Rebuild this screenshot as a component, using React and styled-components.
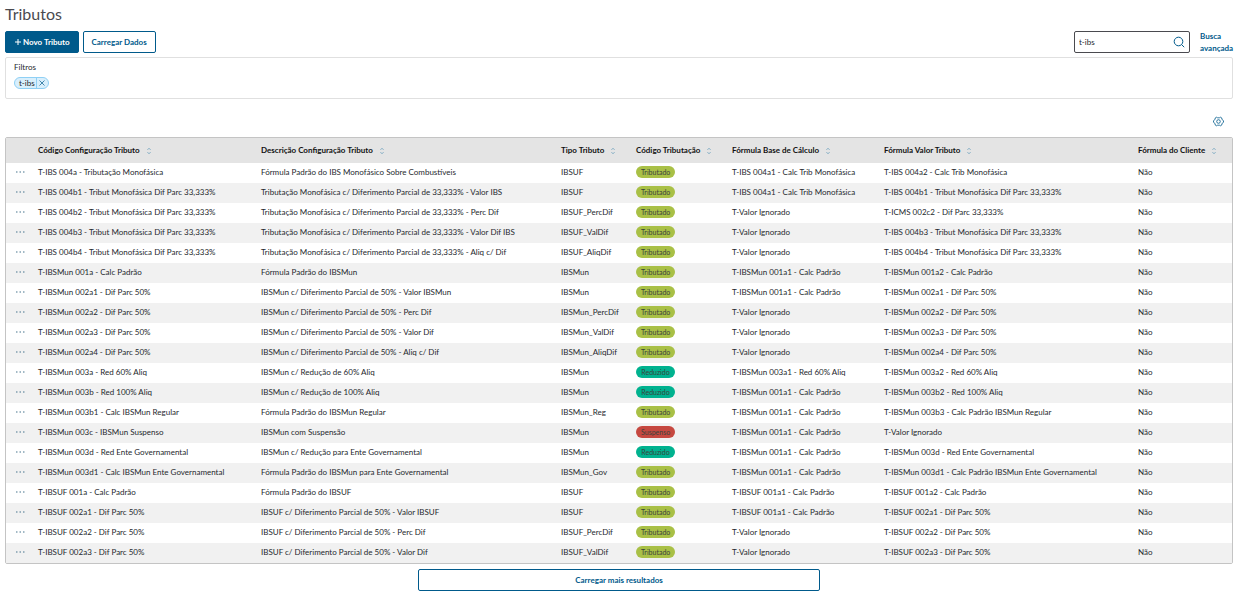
import React, { useState } from "react"
import styled, { createGlobalStyle } from "styled-components"

const colors = {
  primary: "#005a8b",
  text: "#25282d",
  muted: "#4a4a4f",
  line: "#e0e0e0",
  tableLine: "#c4c4c4",
  header: "#e4e4e4",
  stripe: "#f1f1f1",
}

const GlobalStyle = createGlobalStyle`
  * {
    box-sizing: border-box;
  }

  body {
    margin: 0;
    background: #fff;
    color: ${colors.text};
    font: 8px/12px Lato, "Open Sans", sans-serif;
  }

  button,
  input {
    font: inherit;
  }
`

const Page = styled.main`
  padding: 4px 6px 4px 5px;
`

const Title = styled.h1`
  margin: 0 0 6px;
  color: ${colors.muted};
  font-size: 16px;
  font-weight: 400;
  line-height: 20px;
`

const Toolbar = styled.div`
  display: flex;
  align-items: center;
  gap: 4px;
  margin-bottom: 3px;
`

const Button = styled.button`
  display: inline-flex;
  align-items: center;
  justify-content: center;
  gap: 1px;
  height: 22px;
  padding: 0 8px 1px;
  border: 1px solid ${colors.primary};
  border-radius: 2px;
  background: ${props => (props.$primary ? colors.primary : "#fff")};
  color: ${props => (props.$primary ? "#fff" : colors.primary)};
  font-weight: 700;
  white-space: nowrap;
  cursor: pointer;
`

const SearchArea = styled.div`
  display: flex;
  align-items: center;
  gap: 10px;
  margin-left: auto;
`

const SearchBox = styled.div`
  display: flex;
  align-items: center;
  width: 116px;
  height: 22px;
  padding: 0 4px;
  border: 1px solid ${colors.muted};
  border-radius: 2px;

  input {
    flex: 1;
    min-width: 0;
    padding: 0;
    border: 0;
    outline: 0;
    background: none;
    color: ${colors.text};
  }
`

const IconButton = styled.button`
  display: inline-flex;
  align-items: center;
  justify-content: center;
  padding: 0;
  border: 0;
  background: none;
  color: ${colors.primary};
  cursor: pointer;
`

const AdvancedLink = styled.a`
  width: 33px;
  color: ${colors.primary};
  font-weight: 700;
  text-decoration: none;
`

const FilterPanel = styled.section`
  height: 42px;
  padding: 3px 8px;
  border: 1px solid ${colors.line};
  border-radius: 2px;
`

const FilterTitle = styled.div`
  margin-bottom: 4px;
`

const Chip = styled.span`
  display: flex;
  align-items: center;
  width: fit-content;
  height: 12px;
  border: 1px solid #8fd0f5;
  border-radius: 6px;
  background: #d9effc;
  line-height: 10px;
  overflow: hidden;

  span {
    padding: 0 1px 0 4px;
  }

  button {
    width: 12px;
    height: 10px;
    border-left: 1px solid #8fd0f5;
  }
`

const TableTools = styled.div`
  display: flex;
  justify-content: flex-end;
  padding: 17px 9px 10px;
`

const TableFrame = styled.div`
  border: 1px solid ${colors.tableLine};
  border-radius: 2px;
  overflow: hidden;
`

const Table = styled.table`
  width: 100%;
  table-layout: fixed;
  border-collapse: collapse;

  th,
  td {
    padding: 0 0 2px;
    text-align: left;
    white-space: nowrap;
  }

  th {
    height: 25px;
    background: ${colors.header};
    color: #111;
    font-weight: 700;
  }

  td {
    height: 20px;
  }

  tbody tr:nth-child(even) {
    background: ${colors.stripe};
  }
`

const SortButton = styled(IconButton)`
  gap: 6px;
  color: inherit;
  font-weight: 700;

  svg {
    margin-top: 2px;
  }
`

const RowMenu = styled(IconButton)`
  display: flex;
  width: 28px;
  height: 12px;
`

const badgeColors = {
  Tributado: "#a9c046",
  Reduzido: "#00b28f",
  Suspenso: "#c64840",
}

const Badge = styled.span`
  display: block;
  width: fit-content;
  min-width: 39px;
  padding: 0 5px;
  border-radius: 6px;
  background: ${props => badgeColors[props.$kind]};
  color: #39423b;
  font-size: 7px;
  text-align: center;
`

const Footer = styled.div`
  display: flex;
  justify-content: center;
  padding-top: 5px;

  button {
    width: 402px;
  }
`

const PlusIcon = () => (
  <svg width="8" height="8" viewBox="0 0 8 8" stroke="currentColor" fill="none">
    <path d="M4 1v6M1 4h6" />
  </svg>
)

const SearchIcon = () => (
  <svg width="12" height="12" viewBox="0 0 12 12" stroke="currentColor" fill="none">
    <circle cx="5.5" cy="5.5" r="4.3" />
    <path d="M8.6 8.6l2.6 2.6" />
  </svg>
)

const CloseIcon = () => (
  <svg width="6" height="6" viewBox="0 0 6 6" stroke="currentColor" strokeWidth="0.7">
    <path d="M.5.5l5 5M5.5.5l-5 5" />
  </svg>
)

const GearIcon = () => (
  <svg width="11" height="11" viewBox="0 0 11 11" stroke="currentColor" fill="none" strokeWidth="0.8">
    <path d="M3.3 1.2L4.6 1.8H6.4L7.7 1.2 8.8 2 8.9 3.400 10.500 4.700V6.300L8.900 7.600 8.800 9 7.700 9.800 6.400 9.200H4.600L3.300 9.800 2.200 9 2.100 7.600.5 6.300V4.700L2.100 3.400 2.200 2z" />
    <circle cx="5.500" cy="5.500" r="1.800" />
  </svg>
)

const SortIcon = () => (
  <svg width="6" height="8" viewBox="0 0 6 8" stroke="#4d8fb3" fill="none" strokeWidth="0.7">
    <path d="M1.500 2.800L3 1.300 4.500 2.800M1.500 5.200L3 6.700 4.500 5.200" />
  </svg>
)

const DotsIcon = () => (
  <svg width="9" height="2" viewBox="0 0 9 2" fill="#47748d">
    <path d="M0 .5h1.500v1H0zM3.500.5H5v1H3.500zM7 .5h1.500v1H7z" />
  </svg>
)

const columns = [
  { title: "Código Configuração Tributo", width: 223 },
  { title: "Descrição Configuração Tributo", width: 300 },
  { title: "Tipo Tributo", width: 75 },
  { title: "Código Tributação", width: 96 },
  { title: "Fórmula Base de Cálculo", width: 152 },
  { title: "Fórmula Valor Tributo", width: 254 },
  { title: "Fórmula do Cliente", width: 94 },
]

const rows = [
  ["T-IBS 004a - Tributação Monofásica", "Fórmula Padrão do IBS Monofásico Sobre Combustíveis", "IBSUF", "Tributado", "T-IBS 004a1 - Calc Trib Monofásica", "T-IBS 004a2 - Calc Trib Monofásica"],
  ["T-IBS 004b1 - Tribut Monofásica Dif Parc 33,333%", "Tributação Monofásica c/ Diferimento Parcial de 33,333% - Valor IBS", "IBSUF", "Tributado", "T-IBS 004a1 - Calc Trib Monofásica", "T-IBS 004b1 - Tribut Monofásica Dif Parc 33,333%"],
  ["T-IBS 004b2 - Tribut Monofásica Dif Parc 33,333%", "Tributação Monofásica c/ Diferimento Parcial de 33,333% - Perc Dif", "IBSUF_PercDif", "Tributado", "T-Valor Ignorado", "T-ICMS 002c2 - Dif Parc 33,333%"],
  ["T-IBS 004b3 - Tribut Monofásica Dif Parc 33,333%", "Tributação Monofásica c/ Diferimento Parcial de 33,333% - Valor Dif IBS", "IBSUF_ValDif", "Tributado", "T-Valor Ignorado", "T-IBS 004b3 - Tribut Monofásica Dif Parc 33,333%"],
  ["T-IBS 004b4 - Tribut Monofásica Dif Parc 33,333%", "Tributação Monofásica c/ Diferimento Parcial de 33,333% - Aliq c/ Dif", "IBSUF_AliqDif", "Tributado", "T-Valor Ignorado", "T-IBS 004b4 - Tribut Monofásica Dif Parc 33,333%"],
  ["T-IBSMun 001a - Calc Padrão", "Fórmula Padrão do IBSMun", "IBSMun", "Tributado", "T-IBSMun 001a1 - Calc Padrão", "T-IBSMun 001a2 - Calc Padrão"],
  ["T-IBSMun 002a1 - Dif Parc 50%", "IBSMun c/ Diferimento Parcial de 50% - Valor IBSMun", "IBSMun", "Tributado", "T-IBSMun 001a1 - Calc Padrão", "T-IBSMun 002a1 - Dif Parc 50%"],
  ["T-IBSMun 002a2 - Dif Parc 50%", "IBSMun c/ Diferimento Parcial de 50% - Perc Dif", "IBSMun_PercDif", "Tributado", "T-Valor Ignorado", "T-IBSMun 002a2 - Dif Parc 50%"],
  ["T-IBSMun 002a3 - Dif Parc 50%", "IBSMun c/ Diferimento Parcial de 50% - Valor Dif", "IBSMun_ValDif", "Tributado", "T-Valor Ignorado", "T-IBSMun 002a3 - Dif Parc 50%"],
  ["T-IBSMun 002a4 - Dif Parc 50%", "IBSMun c/ Diferimento Parcial de 50% - Aliq c/ Dif", "IBSMun_AliqDif", "Tributado", "T-Valor Ignorado", "T-IBSMun 002a4 - Dif Parc 50%"],
  ["T-IBSMun 003a - Red 60% Aliq", "IBSMun c/ Redução de 60% Aliq", "IBSMun", "Reduzido", "T-IBSMun 003a1 - Red 60% Aliq", "T-IBSMun 003a2 - Red 60% Aliq"],
  ["T-IBSMun 003b - Red 100% Aliq", "IBSMun c/ Redução de 100% Aliq", "IBSMun", "Reduzido", "T-IBSMun 001a1 - Calc Padrão", "T-IBSMun 003b2 - Red 100% Aliq"],
  ["T-IBSMun 003b1 - Calc IBSMun Regular", "Fórmula Padrão do IBSMun Regular", "IBSMun_Reg", "Tributado", "T-IBSMun 001a1 - Calc Padrão", "T-IBSMun 003b3 - Calc Padrão IBSMun Regular"],
  ["T-IBSMun 003c - IBSMun Suspenso", "IBSMun com Suspensão", "IBSMun", "Suspenso", "T-IBSMun 001a1 - Calc Padrão", "T-Valor Ignorado"],
  ["T-IBSMun 003d - Red Ente Governamental", "IBSMun c/ Redução para Ente Governamental", "IBSMun", "Reduzido", "T-IBSMun 001a1 - Calc Padrão", "T-IBSMun 003d - Red Ente Governamental"],
  ["T-IBSMun 003d1 - Calc IBSMun Ente Governamental", "Fórmula Padrão do IBSMun para Ente Governamental", "IBSMun_Gov", "Tributado", "T-IBSMun 001a1 - Calc Padrão", "T-IBSMun 003d1 - Calc Padrão IBSMun Ente Governamental"],
  ["T-IBSUF 001a - Calc Padrão", "Fórmula Padrão do IBSUF", "IBSUF", "Tributado", "T-IBSUF 001a1 - Calc Padrão", "T-IBSUF 001a2 - Calc Padrão"],
  ["T-IBSUF 002a1 - Dif Parc 50%", "IBSUF c/ Diferimento Parcial de 50% - Valor IBSUF", "IBSUF", "Tributado", "T-IBSUF 001a1 - Calc Padrão", "T-IBSUF 002a1 - Dif Parc 50%"],
  ["T-IBSUF 002a2 - Dif Parc 50%", "IBSUF c/ Diferimento Parcial de 50% - Perc Dif", "IBSUF_PercDif", "Tributado", "T-Valor Ignorado", "T-IBSUF 002a2 - Dif Parc 50%"],
  ["T-IBSUF 002a3 - Dif Parc 50%", "IBSUF c/ Diferimento Parcial de 50% - Valor Dif", "IBSUF_ValDif", "Tributado", "T-Valor Ignorado", "T-IBSUF 002a3 - Dif Parc 50%"],
]

const TaxRow = ({ data }) => {
  const [code, description, type, taxation, baseFormula, valueFormula] = data
  return (
    <tr>
      <td>
        <RowMenu aria-label={`Ações de ${code}`}>
          <DotsIcon />
        </RowMenu>
      </td>
      <td>{code}</td>
      <td>{description}</td>
      <td>{type}</td>
      <td>
        <Badge $kind={taxation}>{taxation}</Badge>
      </td>
      <td>{baseFormula}</td>
      <td>{valueFormula}</td>
      <td>Não</td>
    </tr>
  )
}

const App = () => {
  const [search, setSearch] = useState("t-ibs")

  return (
    <>
      <GlobalStyle />
      <Page>
        <Title>Tributos</Title>
        <Toolbar>
          <Button $primary>
            <PlusIcon />
            Novo Tributo
          </Button>
          <Button>Carregar Dados</Button>
          <SearchArea>
            <SearchBox>
              <input
                aria-label="Buscar"
                value={search}
                onChange={e => setSearch(e.target.value)}
              />
              <IconButton aria-label="Pesquisar">
                <SearchIcon />
              </IconButton>
            </SearchBox>
            <AdvancedLink href="#busca">Busca avançada</AdvancedLink>
          </SearchArea>
        </Toolbar>
        <FilterPanel>
          <FilterTitle>Filtros</FilterTitle>
          <Chip>
            <span>t-ibs</span>
            <IconButton aria-label="Remover filtro">
              <CloseIcon />
            </IconButton>
          </Chip>
        </FilterPanel>
        <TableTools>
          <IconButton aria-label="Configurar colunas">
            <GearIcon />
          </IconButton>
        </TableTools>
        <TableFrame>
          <Table>
            <colgroup>
              <col width="32" />
              {columns.map(column => (
                <col key={column.title} width={column.width} />
              ))}
            </colgroup>
            <thead>
              <tr>
                <th />
                {columns.map(column => (
                  <th key={column.title}>
                    <SortButton>
                      {column.title}
                      <SortIcon />
                    </SortButton>
                  </th>
                ))}
              </tr>
            </thead>
            <tbody>
              {rows.map(row => (
                <TaxRow key={row[0]} data={row} />
              ))}
            </tbody>
          </Table>
        </TableFrame>
        <Footer>
          <Button>Carregar mais resultados</Button>
        </Footer>
      </Page>
    </>
  )
}

export default App
